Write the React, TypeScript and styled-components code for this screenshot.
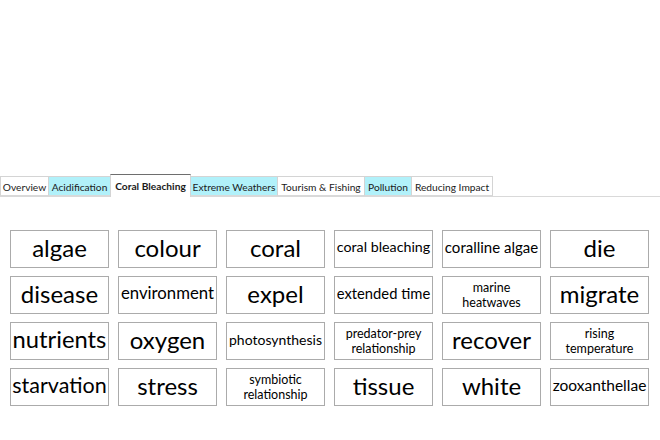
import { useLayoutEffect, useRef, useState } from "react";
import styled, { createGlobalStyle } from "styled-components";

const GlobalStyle = createGlobalStyle`
    html, body {
        margin: 0;
        padding: 0;
        background: #ffffff;
    }
`;

const Page = styled.div`
    width: 660px;
    height: 440px;
    padding-top: 174px;
    box-sizing: border-box;
    overflow: hidden;
`;

const TabStrip = styled.div`
    display: flex;
    align-items: flex-end;
    height: 23px;
    border-bottom: 1px solid #d9d9d9;
    box-sizing: border-box;
`;

const Tab = styled.div<{ $tint: boolean; $active: boolean; $width: number }>`
    width: ${(p) => p.$width}px;
    height: ${(p) => (p.$active ? 23 : 20)}px;
    margin-bottom: ${(p) => (p.$active ? -1 : 0)}px;
    box-sizing: border-box;
    display: flex;
    align-items: center;
    justify-content: center;
    padding-top: ${(p) => (p.$active ? 0 : 1)}px;
    font-family: "Lato", "Open Sans", sans-serif;
    font-size: 10.2px;
    font-weight: ${(p) => (p.$active ? 700 : 400)};
    color: #1a1a1a;
    white-space: nowrap;
    background: ${(p) => (p.$active ? "#ffffff" : p.$tint ? "#b1f1fa" : "#ffffff")};
    border: 1px solid #d4d4d4;
    border-top-color: ${(p) => (p.$active ? "#6e6e6e" : "#d4d4d4")};
    border-bottom: ${(p) => (p.$active ? "none" : "1px solid #d9d9d9")};
    & + & {
        margin-left: -1px;
    }
`;

const Grid = styled.div`
    display: grid;
    grid-template-columns: repeat(6, 99px);
    grid-auto-rows: 38px;
    column-gap: 9px;
    row-gap: 8px;
    padding: 33px 0 0 10px;
`;

const Card = styled.div`
    box-sizing: border-box;
    border: 1px solid #ababab;
    background: #ffffff;
    display: flex;
    align-items: center;
    justify-content: center;
    overflow: hidden;
    padding: 0 1px;
`;

const Word = styled.div<{ $wrap: boolean }>`
    font-family: "Lato", "Open Sans", sans-serif;
    color: #000000;
    text-align: center;
    white-space: ${(p) => (p.$wrap ? "normal" : "nowrap")};
    line-height: ${(p) => (p.$wrap ? "15px" : "1")};
    padding-bottom: ${(p) => (p.$wrap ? 0 : 3)}px;
    max-width: 100%;
`;

type Term = { text: string; wrap?: boolean };

const tabs = [
    { label: "Overview", tint: false, width: 49 },
    { label: "Acidification", tint: true, width: 63 },
    { label: "Coral Bleaching", tint: false, width: 81, active: true },
    { label: "Extreme Weathers", tint: true, width: 88 },
    { label: "Tourism & Fishing", tint: false, width: 88 },
    { label: "Pollution", tint: true, width: 48 },
    { label: "Reducing Impact", tint: false, width: 82 },
];

const terms: Term[] = [
    { text: "algae" },
    { text: "colour" },
    { text: "coral" },
    { text: "coral bleaching" },
    { text: "coralline algae" },
    { text: "die" },
    { text: "disease" },
    { text: "environment" },
    { text: "expel" },
    { text: "extended time" },
    { text: "marine heatwaves", wrap: true },
    { text: "migrate" },
    { text: "nutrients" },
    { text: "oxygen" },
    { text: "photosynthesis" },
    { text: "predator-prey relationship", wrap: true },
    { text: "recover" },
    { text: "rising temperature", wrap: true },
    { text: "starvation" },
    { text: "stress" },
    { text: "symbiotic relationship", wrap: true },
    { text: "tissue" },
    { text: "white" },
    { text: "zooxanthellae" },
];

function TermCard({ term }: { term: Term }) {
    const ref = useRef<HTMLDivElement>(null);
    const [size, setSize] = useState(term.wrap ? 12.5 : 24);

    // shrink single-line words until they fit the card
    useLayoutEffect(() => {
        const el = ref.current;
        if (!el || term.wrap) return;
        const card = el.parentElement;
        if (!card) return;
        const room = card.clientWidth - 3;
        let s = 24;
        el.style.fontSize = s + "px";
        while (el.scrollWidth > room && s > 10) {
            s -= 0.25;
            el.style.fontSize = s + "px";
        }
        setSize(s);
    }, [term]);

    return (
        <Card>
            <Word ref={ref} $wrap={!!term.wrap} style={{ fontSize: size }}>
                {term.text}
            </Word>
        </Card>
    );
}

export default function App() {
    return (
        <>
            <GlobalStyle />
            <Page>
                <TabStrip>
                    {tabs.map((t) => (
                        <Tab key={t.label} $tint={t.tint} $active={!!t.active} $width={t.width}>
                            {t.label}
                        </Tab>
                    ))}
                </TabStrip>
                <Grid>
                    {terms.map((t) => (
                        <TermCard key={t.text} term={t} />
                    ))}
                </Grid>
            </Page>
        </>
    );
}
